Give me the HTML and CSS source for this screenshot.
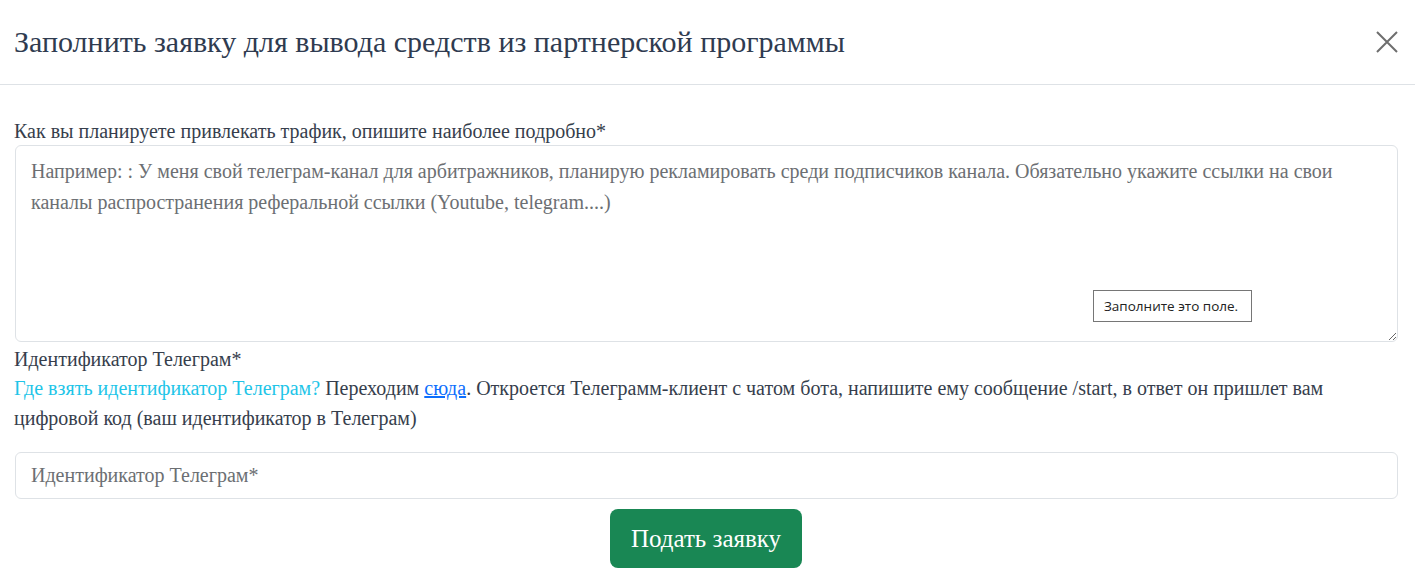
FILE: index.html
```html
<!DOCTYPE html>
<html lang="ru">
<head>
<meta charset="utf-8">
<link rel="stylesheet" href="styles.css">
</head>
<body>
<div class="modal">
  <div class="modal-header">
    <h5 class="modal-title">Заполнить заявку для вывода средств из партнерской программы</h5>
    <button class="btn-close" type="button" aria-label="Закрыть">
      <svg width="22" height="22" viewBox="0 0 22 22"><path d="M1 1L21 21M21 1L1 21" stroke="#6e6e6e" stroke-width="2" fill="none"/></svg>
    </button>
  </div>
  <div class="modal-body">
    <label class="form-label">Как вы планируете привлекать трафик, опишите наиболее подробно*</label>
    <div class="textarea-wrap">
      <textarea class="form-control textarea" placeholder="Например: : У меня свой телеграм-канал для арбитражников, планирую рекламировать среди подписчиков канала. Обязательно укажите ссылки на свои каналы распространения реферальной ссылки (Youtube, telegram....)"></textarea>
      <div class="tooltip">Заполните это поле.</div>
    </div>
    <label class="form-label label-tg">Идентификатор Телеграм*</label>
    <p class="help"><span class="info">Где взять идентификатор Телеграм?</span> Переходим <a href="#" class="link">сюда</a>. Откроется Телеграмм-клиент с чатом бота, напишите ему сообщение /start, в ответ он пришлет вам цифровой код (ваш идентификатор в Телеграм)</p>
    <input class="form-control input" type="text" placeholder="Идентификатор Телеграм*">
    <div class="actions">
      <button class="btn-submit" type="button">Подать заявку</button>
    </div>
  </div>
</div>
</body>
</html>
```

FILE: styles.css
```css
* { box-sizing: border-box; }
html, body { margin: 0; padding: 0; background: #fff; }
body {
  font-family: "Liberation Serif", "Times New Roman", serif;
  color: #363e4c;
  width: 1415px;
  height: 581px;
  overflow: hidden;
}
.modal { width: 1415px; }
.modal-header {
  display: flex;
  align-items: center;
  justify-content: space-between;
  height: 85px;
  padding: 0 16px 0 14px;
  border-bottom: 1px solid #dee2e6;
}
.modal-title {
  margin: 0;
  font-size: 30px;
  font-weight: 400;
  color: #2f3b50;
  line-height: 1.2;
}
.btn-close {
  border: 0;
  background: transparent;
  padding: 0;
  width: 22px;
  height: 22px;
  margin-right: 1px;
  display: flex;
  cursor: pointer;
}
.modal-body {
  padding: 34px 17px 0 15px;
  display: flex;
  flex-direction: column;
}
.form-label {
  display: block;
  font-size: 20px;
  line-height: 24px;
  margin-bottom: 2px;
  color: #363e4c;
  margin-left: -1px;
}
.textarea-wrap { position: relative; }
.form-control {
  width: 100%;
  font-family: "Liberation Serif", "Times New Roman", serif;
  font-size: 20px;
  color: #363e4c;
  border: 1px solid #dee2e6;
  border-radius: 6px;
  background: #fff;
  outline: none;
}
.form-control::placeholder { color: #6c6f73; opacity: 1; }
.textarea {
  display: block;
  height: 197px;
  padding: 10px 15px;
  line-height: 31px;
  resize: vertical;
}
.tooltip {
  position: absolute;
  left: 1078px;
  top: 145px;
  height: 32px;
  padding: 0 13px 0 10px;
  display: flex;
  align-items: center;
  border: 1px solid #767676;
  background: #fff;
  font-family: "Open Sans", "DejaVu Sans", sans-serif;
  font-size: 13.5px;
  color: #222;
}
.label-tg { margin-top: 3px; margin-bottom: 0; line-height: 28px; }
.help {
  margin: 0 0 19px -1px;
  font-size: 20px;
  line-height: 30px;
  color: #363e4c;
}
.info { color: #1ec5e8; }
.link { color: #0d6efd; text-decoration: underline; }
.input {
  height: 47px;
  padding: 0 15px;
}
.actions {
  display: flex;
  justify-content: center;
  padding-top: 10px;
}
.btn-submit {
  width: 192px;
  height: 59px;
  border: 0;
  border-radius: 8px;
  background: #198754;
  color: #fff;
  font-family: "Liberation Serif", "Times New Roman", serif;
  font-size: 25px;
  margin-left: -1px;
}
```
